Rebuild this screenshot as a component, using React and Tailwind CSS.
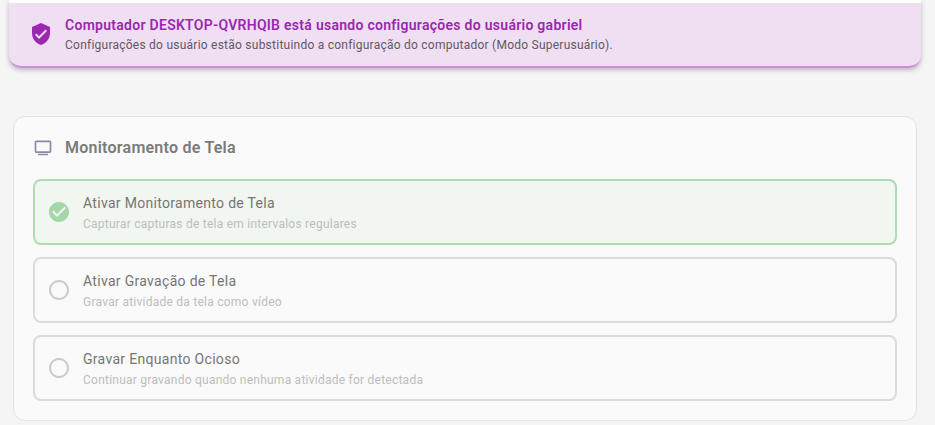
const options = [
  { title: 'Ativar Monitoramento de Tela', desc: 'Capturar capturas de tela em intervalos regulares', on: true },
  { title: 'Ativar Gravação de Tela', desc: 'Gravar atividade da tela como vídeo', on: false },
  { title: 'Gravar Enquanto Ocioso', desc: 'Continuar gravando quando nenhuma atividade for detectada', on: false },
]

function Icon({ d, className }) {
  return (
    <svg viewBox="0 0 24 24" fill="currentColor" className={className}>
      <path d={d} />
    </svg>
  )
}

function OptionRow({ title, desc, on }) {
  return (
    <div className={`flex items-center h-[66px] pl-3 rounded-lg border-2 ${on ? 'border-[#aedbb0] bg-[#f1f6f1]' : 'border-[#dbdbdb] bg-[#fafafa]'}`}>
      {on ? (
        <Icon
          className="w-6 h-6 text-[#a5d6a7] shrink-0"
          d="M12 2C6.48 2 2 6.48 2 12s4.48 10 10 10 10-4.48 10-10S17.52 2 12 2zm-2 15-5-5 1.41-1.41L10 14.17l7.59-7.59L19 8l-9 9z"
        />
      ) : (
        <Icon
          className="w-6 h-6 text-[#cacaca] shrink-0"
          d="M12 2C6.47 2 2 6.47 2 12s4.47 10 10 10 10-4.47 10-10S17.53 2 12 2zm0 18c-4.41 0-8-3.59-8-8s3.59-8 8-8 8 3.59 8 8-3.59 8-8 8z"
        />
      )}
      <div className="ml-3 pt-[2px]">
        <div className="text-sm leading-[20px] tracking-[0.022em] text-[#757575]">{title}</div>
        <div className="text-xs leading-[18px] mt-[2px] tracking-[0.02em] text-[#bdbdbd]">{desc}</div>
      </div>
    </div>
  )
}

export default function App() {
  return (
    <div className="w-[935px] h-[425px] overflow-hidden bg-[#f5f5f5] font-['Roboto',sans-serif]">
      <div className="mx-[9px] w-[912px] bg-white pt-[3px] rounded-b-xl shadow-[0_2px_5px_rgba(0,0,0,0.25)]">
        <div className="flex items-center h-[65px] pl-[20px] pb-[1px] bg-[#f0def2] border-b-2 border-[#cd8fdc] rounded-b-xl">
          <Icon
            className="w-6 h-6 text-[#9c27b0] shrink-0"
            d="M12 1 3 5v6c0 5.55 3.84 10.74 9 12 5.16-1.26 9-6.45 9-12V5l-9-4zm-2 16-4-4 1.41-1.41L10 14.17l6.59-6.59L18 9l-8 8z"
          />
          <div className="ml-[12px]">
            <div className="text-sm leading-[20px] font-semibold tracking-[0.02em] text-[#9c27b0]">
              Computador DESKTOP-QVRHQIB está usando configurações do usuário gabriel
            </div>
            <div className="text-xs leading-[18px] mt-[1px] tracking-[0.02em] text-[#5f5a62]">
              Configurações do usuário estão substituindo a configuração do computador (Modo Superusuário).
            </div>
          </div>
        </div>
      </div>

      <div className="mt-[48px] mx-[13px] w-[904px] h-[305px] px-[19px] bg-[#fafafa] border border-[#e3e3e3] rounded-xl">
        <div className="flex items-center h-[62px]">
          <Icon
            className="w-5 h-5 text-[#8a8aa8] shrink-0"
            d="M20 3H4c-1.1 0-2 .9-2 2v11c0 1.1.9 2 2 2h16c1.1 0 2-.9 2-2V5c0-1.1-.9-2-2-2zm0 13H4V5h16v11zM6 19h12v1.8H6z"
          />
          <h2 className="ml-[12px] text-base font-semibold tracking-[0.015em] text-[#7b7b7b]">Monitoramento de Tela</h2>
        </div>
        <div className="flex flex-col gap-3">
          {options.map((o) => (
            <OptionRow key={o.title} {...o} />
          ))}
        </div>
      </div>
    </div>
  )
}
